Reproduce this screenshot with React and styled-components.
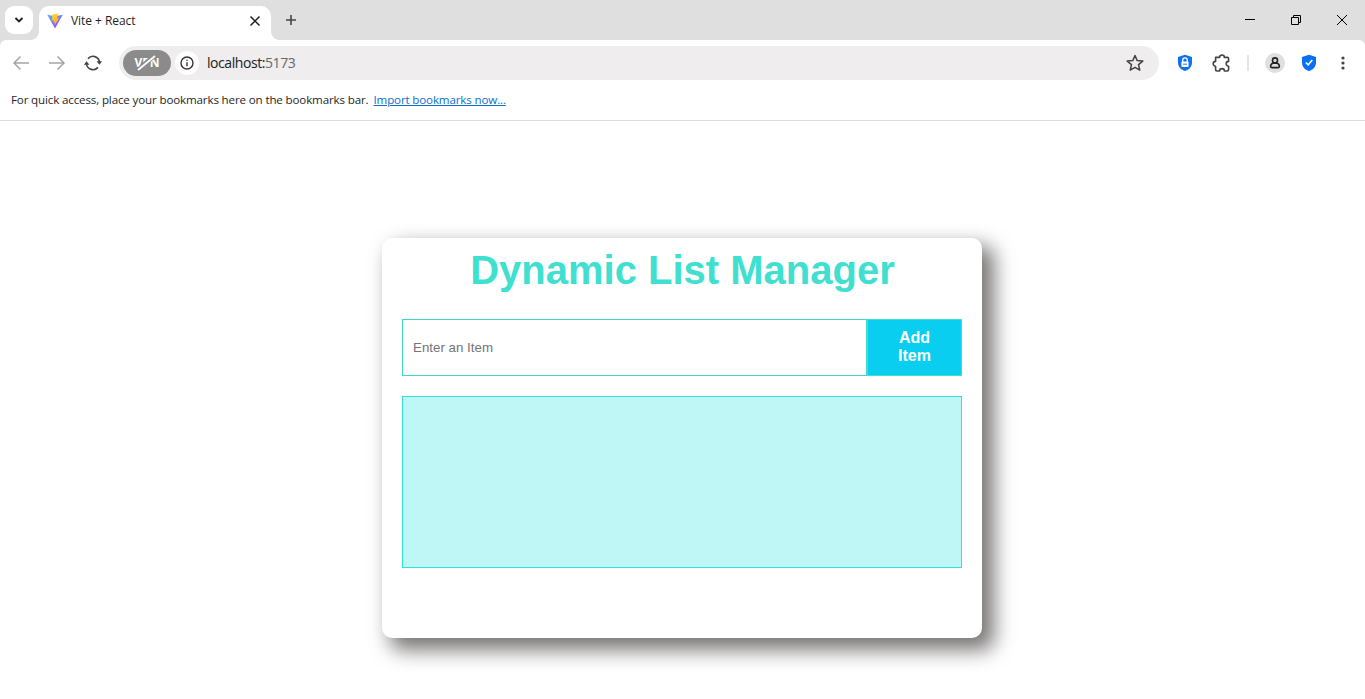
import React from "react";
import styled, { createGlobalStyle } from "styled-components";

const Global = createGlobalStyle`
  * { box-sizing: border-box; }
  body { margin: 0; background: #fff; overflow: hidden; font-family: "Liberation Sans", Arial, sans-serif; }
`;

const Window = styled.div`
  width: 100%;
  height: 699px;
  display: flex;
  flex-direction: column;
  background: #fff;
`;

const TabStrip = styled.header`
  height: 40px;
  flex: none;
  display: flex;
  align-items: flex-end;
  background: #dfdfdf;
`;

const TabSearch = styled.button`
  width: 28px;
  height: 28px;
  margin: 0 6px 6px 5px;
  padding: 0;
  border: 0;
  border-radius: 9px;
  background: #fff;
  display: grid;
  place-items: center;
`;

const Tab = styled.div`
  position: relative;
  width: 232px;
  height: 34px;
  padding: 0 9px 5px 8px;
  border-radius: 10px 10px 0 0;
  background: #fff;
  display: flex;
  align-items: center;
  &::before,
  &::after {
    content: "";
    position: absolute;
    bottom: 0;
    width: 8px;
    height: 8px;
  }
  &::before { left: -8px; background: radial-gradient(circle at 0 0, transparent 7.5px, #fff 8px); }
  &::after { right: -8px; background: radial-gradient(circle at 100% 0, transparent 7.5px, #fff 8px); }
`;

const TabTitle = styled.span`
  flex: 1;
  margin-left: 8px;
  font: 12px/16px "Open Sans", "Noto Sans", sans-serif;
  letter-spacing: -0.05px;
  color: #1f1f1f;
`;

const NewTab = styled.button`
  margin: 0 0 12px 12px;
  padding: 0;
  border: 0;
  background: none;
  height: 16px;
`;

const WindowControls = styled.div`
  margin-left: auto;
  height: 40px;
  display: flex;
  align-items: center;
`;

const ControlButton = styled.button`
  width: 46px;
  height: 40px;
  padding: 0;
  border: 0;
  background: none;
  display: grid;
  place-items: center;
`;

const ToolbarBack = styled.div`
  background: #dfdfdf;
  flex: none;
`;

const Toolbar = styled.nav`
  height: 46px;
  padding: 0 12px;
  border-radius: 6px 6px 0 0;
  background: #fff;
  display: flex;
  align-items: center;
`;

const NavIcons = styled.div`
  width: 107px;
  display: flex;
  gap: 18px;
`;

const AddressBar = styled.div`
  width: 1040px;
  height: 34px;
  padding: 0 15px 0 4px;
  border-radius: 17px;
  background: #efedee;
  display: flex;
  align-items: center;
`;

const VpnBadge = styled.span`
  width: 48px;
  height: 26px;
  border-radius: 13px;
  background: #8b8b8b;
  display: grid;
  place-items: center;
  font: bold 12px/26px "Open Sans", "Noto Sans", sans-serif;
  color: #fff;
  > * { grid-area: 1 / 1; }
`;

const InfoCircle = styled.span`
  width: 24px;
  height: 24px;
  margin-left: 4px;
  border-radius: 50%;
  background: #fff;
  display: grid;
  place-items: center;
`;

const Url = styled.span`
  flex: 1;
  margin-left: 8px;
  font: 14px/20px "Open Sans", "Noto Sans", sans-serif;
  letter-spacing: -0.43px;
  color: #202124;
`;

const Port = styled.span`
  color: #65676a;
`;

const Extensions = styled.div`
  flex: 1;
  margin-left: 16px;
  display: flex;
  align-items: center;
`;

const Divider = styled.span`
  width: 2px;
  height: 16px;
  margin: 0 16px;
  background: #e5e5e5;
`;

const Avatar = styled.span`
  width: 20px;
  height: 20px;
  margin-right: 14px;
  border-radius: 50%;
  background: #dfdfdf;
  display: grid;
  place-items: center;
`;

const Menu = styled.span`
  margin-left: 15px;
  display: flex;
`;

const Puzzle = styled.span`
  margin-left: 16px;
  display: flex;
`;

const BookmarksBar = styled.div`
  height: 35px;
  flex: none;
  padding: 0 11px 6px;
  border-bottom: 1px solid #dcdcdc;
  display: flex;
  align-items: center;
  font: 11.6px/16px "Open Sans", "Noto Sans", sans-serif;
  letter-spacing: -0.15px;
  color: #1f1f1f;
  white-space: nowrap;
`;

const ImportLink = styled.a`
  margin-left: 5px;
  color: #0b6fd0;
  text-decoration: underline;
  text-underline-offset: 1px;
`;

const Page = styled.main`
  flex: 1;
  display: flex;
  justify-content: center;
  align-items: flex-start;
  padding: 117px 1px 0 0;
`;

const Card = styled.section`
  width: 600px;
  height: 400px;
  padding: 9px 20px 0;
  border-radius: 10px;
  background: #fff;
  box-shadow: 10px 10px 20px 2px #797575;
`;

const Title = styled.h1`
  margin: 0 0 26px;
  padding-left: 1px;
  font-size: 40px;
  line-height: 46px;
  text-align: center;
  color: #40e0d0;
`;

const EntryRow = styled.form`
  height: 57px;
  display: flex;
`;

const ItemInput = styled.input`
  width: 465px;
  padding: 0 10px;
  border: 1px solid #40d9ca;
  outline: 0;
  font: 13.333px "Liberation Sans", Arial, sans-serif;
  &::placeholder { color: #757575; }
`;

const AddButton = styled.button`
  width: 95px;
  padding: 0 26px 2px;
  border: 1px solid #40e0d0;
  background: #09cef0;
  color: #fff;
  font: bold 16px/18px "Liberation Sans", Arial, sans-serif;
`;

const List = styled.ul`
  height: 172px;
  margin: 20px 0 0;
  padding: 0;
  border: 1px solid #36e0d2;
  background: #bff7f7;
  list-style: none;
`;

const ViteLogo = () => (
  <svg width="16" height="16" viewBox="0 0 16 16">
    <defs>
      <linearGradient id="v" x1="0" y1="0" x2=".7" y2="1">
        <stop stopColor="#41b8ff" />
        <stop offset="1" stopColor="#a83cff" />
      </linearGradient>
      <linearGradient id="b" x1="0" y1="0" x2="0" y2="1">
        <stop stopColor="#ffd83a" />
        <stop offset="1" stopColor="#ffa22a" />
      </linearGradient>
    </defs>
    <path d="M.3 1.8 8 15.5 15.7 1.8 8 3.2Z" fill="url(#v)" />
    <path d="M11.4 .3 5.2 1.4 4.8 7.7 6.8 7.4 6.4 10 8 9.6 7.5 12.5 12.2 5 10 5.4Z" fill="url(#b)" />
  </svg>
);

const stroke = { fill: "none", stroke: "#444", strokeWidth: 1.6 };

export default function App() {
  return (
    <Window>
      <Global />
      <TabStrip>
        <TabSearch>
          <svg width="10" height="8" {...stroke} stroke="#1f1f1f" strokeWidth="1.8"><path d="M1.5 2 5 5.5 8.5 2" /></svg>
        </TabSearch>
        <Tab>
          <ViteLogo />
          <TabTitle>Vite + React</TabTitle>
          <svg width="14" height="14" {...stroke} stroke="#1f1f1f" strokeWidth="1.5"><path d="M2.5 2.5 11.5 11.5M11.5 2.5 2.5 11.5" /></svg>
        </Tab>
        <NewTab>
          <svg width="16" height="16" {...stroke}><path d="M8 3V13M3 8H13" /></svg>
        </NewTab>
        <WindowControls>
          <ControlButton><svg width="10" height="10"><path d="M0 4.5H10" stroke="#000" /></svg></ControlButton>
          <ControlButton>
            <svg width="10" height="10" fill="none" stroke="#000"><path d="M.5 2.5H7.5V9.5H.5ZM2.5 2.5V.5H9.5V7.5H7.5" /></svg>
          </ControlButton>
          <ControlButton><svg width="10" height="10" stroke="#000"><path d="M0 0 10 10M10 0 0 10" /></svg></ControlButton>
        </WindowControls>
      </TabStrip>
      <ToolbarBack>
        <Toolbar>
          <NavIcons>
            <svg width="18" height="18" {...stroke} stroke="#a5a5a5" strokeWidth="1.5"><path d="M17 9H2M8.5 2.5 2 9 8.5 15.5" /></svg>
            <svg width="18" height="18" {...stroke} stroke="#a5a5a5" strokeWidth="1.5"><path d="M1 9H16M9.5 2.5 16 9 9.5 15.5" /></svg>
            <svg width="18" height="18" {...stroke}>
              <path d="M4 4.6A6.6 6.6 0 0 1 15.5 8M14 13.4A6.6 6.6 0 0 1 2.5 10" />
              <path d="M12.6 7.3H18.2L15.4 10.7ZM5.4 10.7H-.2L2.6 7.3Z" fill="#444" stroke="none" />
            </svg>
          </NavIcons>
          <AddressBar>
            <VpnBadge>
              <span>VPN</span>
              <svg width="26" height="18"><path d="M3 17 21 1" stroke="#8b8b8b" strokeWidth="4.5" /><path d="M4 16 21 2" stroke="#fff" strokeWidth="1.7" /></svg>
            </VpnBadge>
            <InfoCircle>
              <svg width="14" height="14" {...stroke} stroke="#333" strokeWidth="1.4"><circle cx="7" cy="7" r="6" /><path d="M7 6.2V10.2M7 3.7V5.1" /></svg>
            </InfoCircle>
            <Url>localhost:<Port>5173</Port></Url>
            <svg width="18" height="18" {...stroke} strokeWidth="1.5" strokeLinejoin="round">
              <path d="M9 1.5 11.2 6.6 16.8 7.1 12.5 10.7 13.8 16.2 9 13.3 4.2 16.2 5.5 10.7 1.2 7.1 6.8 6.6Z" />
            </svg>
          </AddressBar>
          <Extensions>
            <svg width="20" height="20" viewBox="0 0 20 20">
              <path d="M10 1.8 17 4V9.5C17 14 14 16.8 10 18 6 16.8 3 14 3 9.5V4Z" fill="#1070ee" />
              <path d="M7.7 9V7.2A2.3 2.3 0 0 1 12.3 7.2V9" fill="none" stroke="#fff" strokeWidth="1.3" />
              <rect x="6.4" y="8.5" width="7.2" height="5.5" rx="1" fill="#fff" />
              <path d="M8 10.5H12V12H8Z" fill="#6ca6f3" />
            </svg>
            <Puzzle>
              <svg width="20" height="20" {...stroke} strokeLinejoin="round">
                <path d="M4.6 4.4H8.6A2.4 2.4 0 0 1 13.4 4.4H16.2Q17.6 4.4 17.6 5.8V8.4A2.4 2.4 0 0 0 17.6 13.2V16.6Q17.6 18 16.2 18H13.4A2.4 2.4 0 0 0 8.6 18H6Q4.6 18 4.6 16.6V13.2A2.4 2.4 0 0 1 4.6 8.4Z" />
              </svg>
            </Puzzle>
            <Divider />
            <Avatar>
              <svg width="12" height="14" {...stroke} stroke="#222" strokeWidth="1.6"><circle cx="6" cy="4.4" r="2.5" /><path d="M3.6 7.3H8.4Q10.4 8.4 10.4 10.2 10.4 11.6 8.9 11.6H3.1Q1.6 11.6 1.6 10.2 1.6 8.4 3.6 7.3Z" /></svg>
            </Avatar>
            <svg width="20" height="20" viewBox="0 0 20 20">
              <path d="M10 1.8 17 4V9.5C17 14 14 16.8 10 18 6 16.8 3 14 3 9.5V4Z" fill="#086ef5" />
              <path d="M6.8 9.5 9.2 11.8 13.3 7" fill="none" stroke="#fff" strokeWidth="1.6" />
            </svg>
            <Menu>
              <svg width="18" height="18" fill="#444"><circle cx="9" cy="4" r="1.6" /><circle cx="9" cy="9" r="1.6" /><circle cx="9" cy="14" r="1.6" /></svg>
            </Menu>
          </Extensions>
        </Toolbar>
      </ToolbarBack>
      <BookmarksBar>
        <span>For quick access, place your bookmarks here on the bookmarks bar.</span>
        <ImportLink>Import bookmarks now...</ImportLink>
      </BookmarksBar>
      <Page>
        <Card>
          <Title>Dynamic List Manager</Title>
          <EntryRow>
            <ItemInput placeholder="Enter an Item" />
            <AddButton type="button">Add Item</AddButton>
          </EntryRow>
          <List />
        </Card>
      </Page>
    </Window>
  );
}
